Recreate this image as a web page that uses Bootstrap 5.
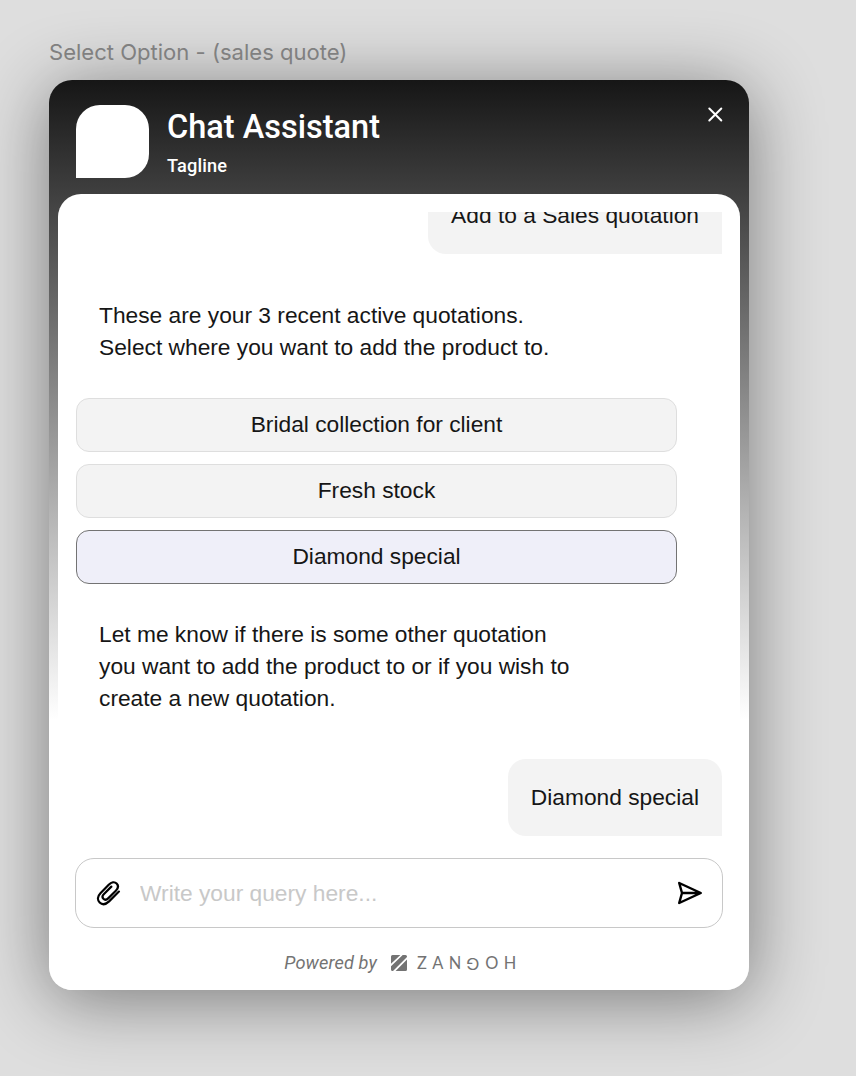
<!DOCTYPE html>
<html lang="en">
<head>
<meta charset="utf-8">
<meta name="viewport" content="width=device-width, initial-scale=1">
<title>Chat Assistant</title>
<link href="https://cdn.jsdelivr.net/npm/bootstrap@5.3.0/dist/css/bootstrap.min.css" rel="stylesheet">
<style>
body { background: #dedede; font-family: "Liberation Sans", Arial, sans-serif; font-size: 22.75px; line-height: 32px; color: #161616; height: 1076px; overflow: hidden; }
.frame-label { font: 400 22.05px/28px Inter, sans-serif; color: #808080; padding: 38px 0 0 49px; height: 80px; position: relative; z-index: 1; }
.chat-window { width: 700px; height: 910px; margin-left: 49px; border-radius: 23px; background: linear-gradient(#161616 0, #fff 640px); box-shadow: 0 9px 72px rgba(0,0,0,.46); }
.chat-header { height: 114px; padding: 25px 26px 0 27px; color: #fff; font-family: Roboto, sans-serif; font-weight: 500; }
.avatar { width: 73px; height: 73px; background: #fff; border-radius: 24px 24px 24px 0; }
.chat-heading { margin-left: 18px; }
.chat-title { font-size: 32.5px; line-height: 38px; font-weight: 500; margin: 3px 0 0; }
.chat-tagline { font-size: 18.2px; line-height: 22px; margin-top: 9px; letter-spacing: .15px; }
.close-icon { margin-top: 1px; }
.chat-panel { width: 682px; height: 796px; background: #fff; border-radius: 23px 23px 14px 14px; padding: 18px 18px 0; }
.message-list { height: 624px; overflow: hidden; }
.bubble { background: #f3f3f3; height: 77px; padding: 0 23px 1px; border-radius: 18px 18px 0 18px; }
.bubble.earlier { margin-top: -35px; }
.bot-text { margin: 0 0 0 23px; white-space: pre-line; }
.bot-text.intro { margin-top: 45px; }
.bot-text.followup { margin-top: 34px; }
.options { width: 601px; gap: 12px; margin-top: 35px; }
.option { height: 54px; padding: 0 0 1px; font-size: inherit; line-height: 1; border: 1px solid #dedede; border-radius: 13px; background: #f3f3f3; color: #161616; }
.option.selected { background: #efeff9; border-color: #737373; }
.composer { height: 70px; margin: 22px -1px 0; border: 1px solid #c8c8c8; border-radius: 19px; padding: 0 19px 0 20px; }
.composer input { font-size: inherit; line-height: 32px; padding: 0 0 1px; border: 0; outline: 0; color: #161616; background: none; margin-left: 18px; min-width: 0; }
.composer input::placeholder { color: #c8c8c8; opacity: 1; }
.powered { margin-top: 19px; font: italic 400 18.2px/32px Roboto, sans-serif; color: #737373; padding-left: 8px; }
.powered .caption-text { letter-spacing: .13px; }
.brand-logo { margin: 0 10px 0 14px; }
.brand-word { font: 400 16.4px/32px Lato, sans-serif; letter-spacing: 5.4px; }
.flip { display: inline-block; transform: rotate(180deg) scaleX(1.15); letter-spacing: 0; margin: 0 6.2px 0 .8px; font-family: Inter, sans-serif; font-size: 15.6px; line-height: 1; position: relative; top: -1px; }
</style>
</head>
<body>
<div class="frame-label">Select Option - (sales quote)</div>
<main class="chat-window d-flex flex-column align-items-center">
  <header class="chat-header w-100 d-flex align-items-start">
    <div class="avatar flex-shrink-0"></div>
    <div class="chat-heading flex-grow-1">
      <h1 class="chat-title">Chat Assistant</h1>
      <div class="chat-tagline">Tagline</div>
    </div>
    <svg class="close-icon" width="16" height="16" viewBox="0 0 16 16" fill="none" stroke="#fff" stroke-width="2" stroke-linecap="round" aria-label="Close"><path d="M2.3 2.5l12 12M14.3 2.5l-12 12"/></svg>
  </header>
  <section class="chat-panel">
    <div class="message-list d-flex flex-column">
      <div class="bubble earlier align-self-end d-flex align-items-center flex-shrink-0">Add to a Sales quotation</div>
      <p class="bot-text intro">These are your 3 recent active quotations.
Select where you want to add the product to.</p>
      <div class="options d-flex flex-column">
        <button class="btn option">Bridal collection for client</button>
        <button class="btn option">Fresh stock</button>
        <button class="btn option selected">Diamond special</button>
      </div>
      <p class="bot-text followup">Let me know if there is some other quotation
you want to add the product to or if you wish to
create a new quotation.</p>
      <div class="bubble align-self-end d-flex align-items-center mt-auto flex-shrink-0">Diamond special</div>
    </div>
    <div class="composer d-flex align-items-center">
      <svg width="26" height="26" viewBox="0 0 27 27" fill="none" stroke="#000" stroke-width="2.3" stroke-linecap="round" stroke-linejoin="round"><path d="M23.8 12L13.6 22.2C10.2 25.4 6.4 25.9 3.8 23.3C1.2 20.7 1.5 17 4.6 13.8L13.2 5C16 2.2 19.3 1.6 21.4 3.7C23.5 5.8 23 8.7 20.6 11.1L12.9 18.8C11.2 20.5 9.1 20.9 7.7 19.5C6.3 18.1 6.6 16.2 8.3 14.5L15.9 6.9"/></svg>
      <input class="flex-grow-1" type="text" placeholder="Write your query here...">
      <svg width="26" height="26" viewBox="0 0 26 26" fill="none" stroke="#000" stroke-width="2.4" stroke-linejoin="round"><path d="M2.2 3L23.8 13L2.2 23L5 13ZM5 13H24"/></svg>
    </div>
    <footer class="powered d-flex justify-content-center align-items-center">
      <span class="caption-text">Powered by</span>
      <svg class="brand-logo" width="16" height="16" viewBox="0 0 16 16" fill="#737373"><path d="M1.5 0H9.4L0 8.7V1.5Q0 0 1.5 0ZM11.7 0H14.5Q16 0 16 1.5V2L2 16H1.5Q0 16 0 14.5V11.2ZM16 4.6V14.5Q16 16 14.5 16H4.6Z"/></svg>
      <span class="brand-word fst-normal">ZAN<span class="flip">G</span>OH</span>
    </footer>
  </section>
</main>
<script src="https://cdn.jsdelivr.net/npm/bootstrap@5.3.0/dist/js/bootstrap.bundle.min.js"></script>
</body>
</html>
